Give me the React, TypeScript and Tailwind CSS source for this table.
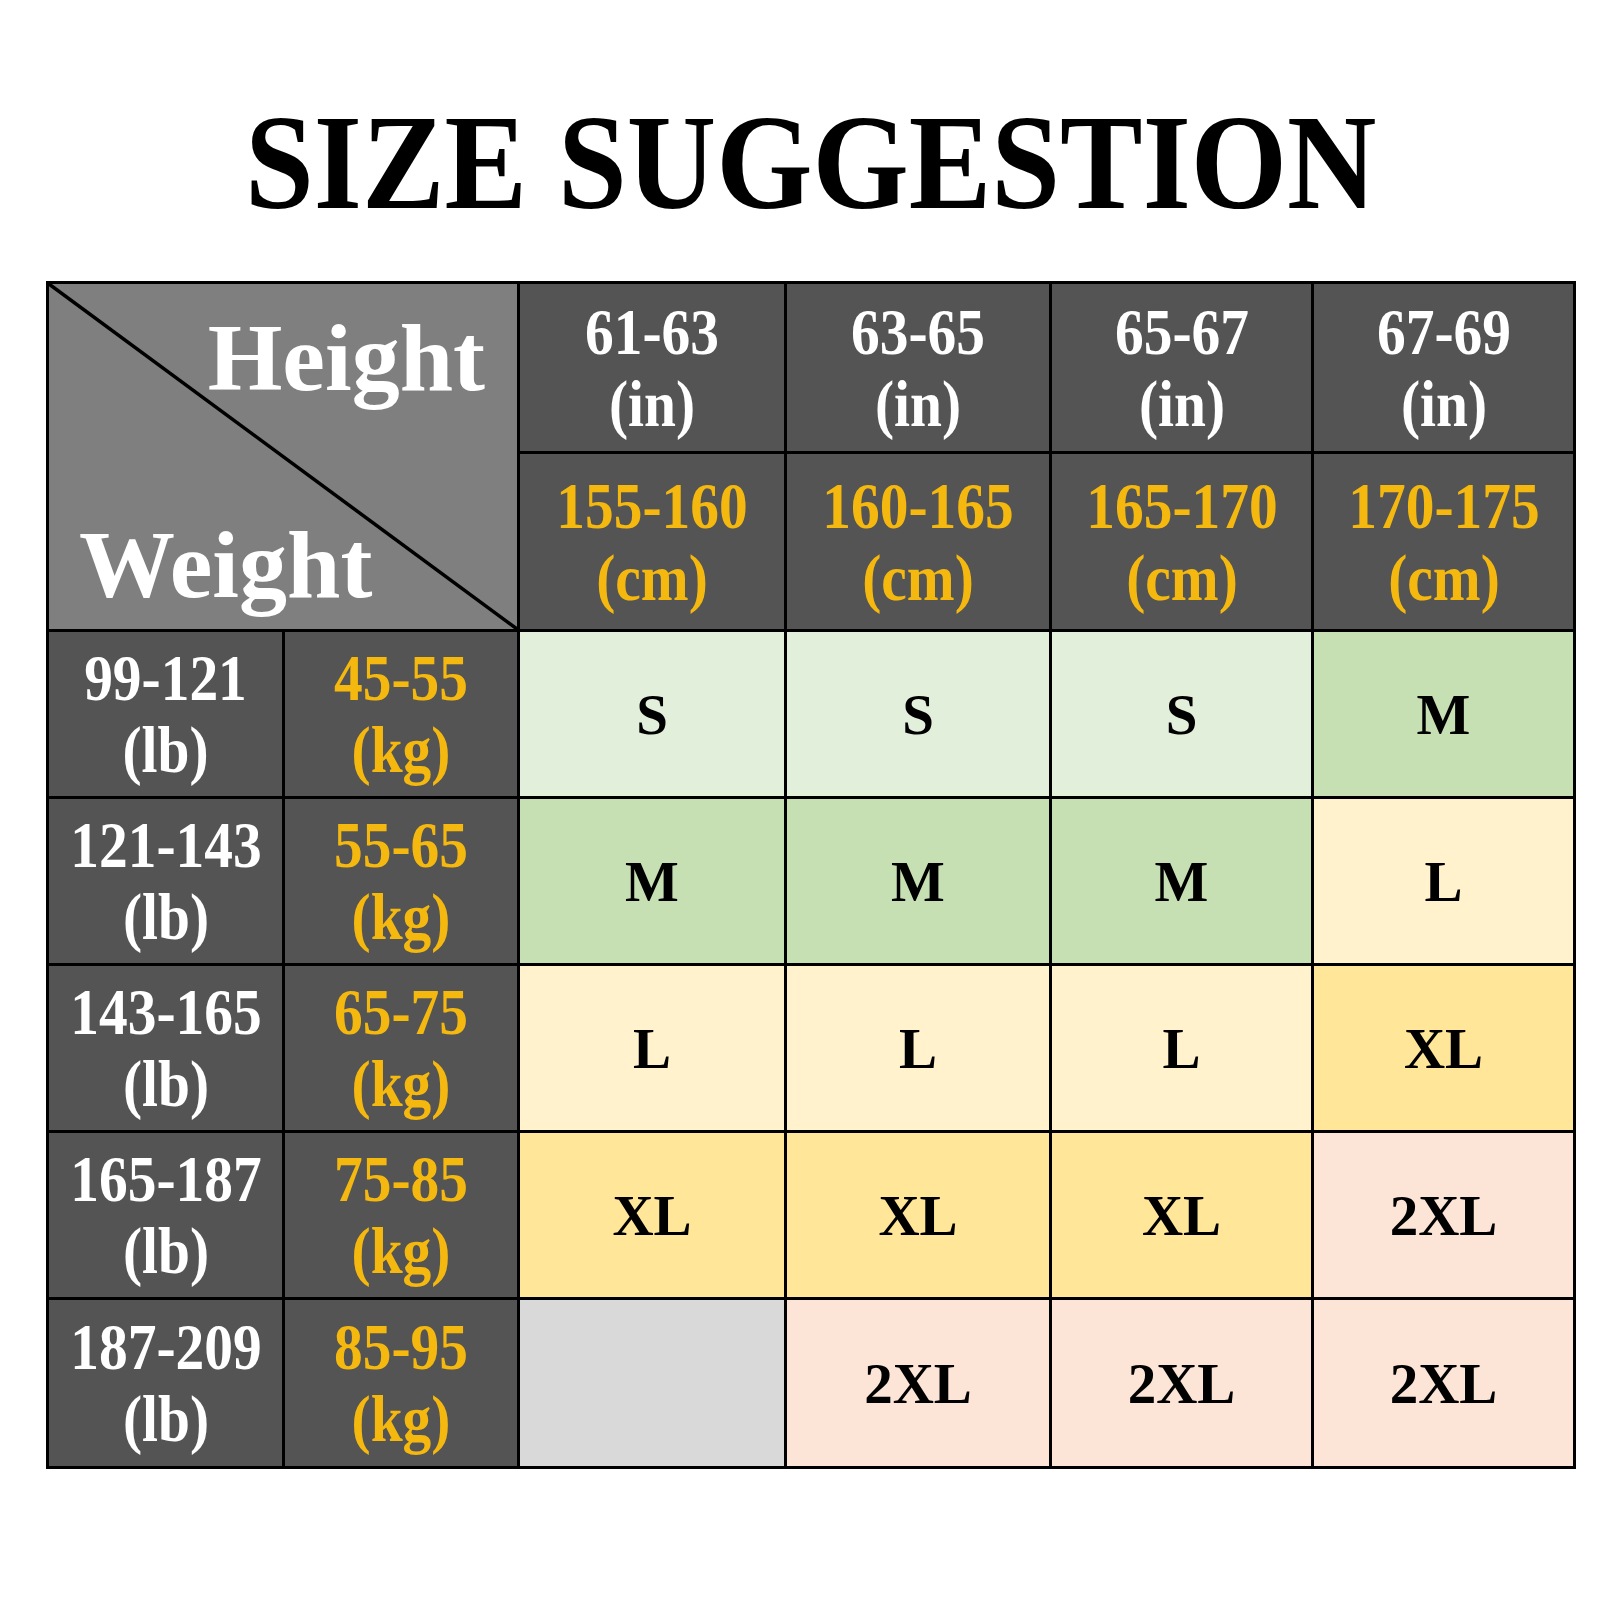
const serif = { fontFamily: '"Liberation Serif", "Times New Roman", serif' };

type Size = "S" | "M" | "L" | "XL" | "2XL" | "";

const sizeBg: Record<Size, string> = {
  S: "bg-[#e2efda]",
  M: "bg-[#c6e0b4]",
  L: "bg-[#fff2cc]",
  XL: "bg-[#ffe699]",
  "2XL": "bg-[#fce4d6]",
  "": "bg-[#d9d9d9]",
};

const heights = [
  { inch: "61-63", cm: "155-160" },
  { inch: "63-65", cm: "160-165" },
  { inch: "65-67", cm: "165-170" },
  { inch: "67-69", cm: "170-175" },
];

const rows: { lb: string; kg: string; sizes: Size[] }[] = [
  { lb: "99-121", kg: "45-55", sizes: ["S", "S", "S", "M"] },
  { lb: "121-143", kg: "55-65", sizes: ["M", "M", "M", "L"] },
  { lb: "143-165", kg: "65-75", sizes: ["L", "L", "L", "XL"] },
  { lb: "165-187", kg: "75-85", sizes: ["XL", "XL", "XL", "2XL"] },
  { lb: "187-209", kg: "85-95", sizes: ["", "2XL", "2XL", "2XL"] },
];

// two-line label cell, text is a bit narrow in the original so squeeze it
const LabelCell = ({ top, bottom, yellow }: { top: string; bottom: string; yellow?: boolean }) => (
  <div className="flex items-center justify-center bg-[#545454]">
    <div
      className={`flex scale-x-[0.87] flex-col items-center text-[66px] font-bold leading-[72px] ${
        yellow ? "text-[#f5b80f]" : "text-white"
      }`}
    >
      <span>{top}</span>
      <span>{bottom}</span>
    </div>
  </div>
);

export default function App() {
  return (
    <div className="min-h-[1600px] w-[1600px] bg-white pl-[46px]" style={serif}>
      <div className="flex w-[1530px] justify-center pt-[94px]">
        <h1 className="scale-x-[0.91] text-[136px] font-bold leading-none text-black">
          SIZE SUGGESTION
        </h1>
      </div>

      <div className="mt-[51px] grid w-[1530px] grid-cols-[233px_232px_264px_262px_259px_259px] grid-rows-[167px_175px_164px_164px_164px_164px_166px] gap-[3px] border-[3px] border-black bg-black">
        {/* corner cell */}
        <div className="relative col-span-2 row-span-2 flex flex-col justify-between bg-[#7f7f7f] pt-[26px] pb-[16px]">
          <svg
            className="absolute inset-0 h-full w-full"
            viewBox="0 0 100 100"
            preserveAspectRatio="none"
          >
            <line x1="0" y1="0" x2="100" y2="100" stroke="black" strokeWidth="3.5" vectorEffect="non-scaling-stroke" />
          </svg>
          <span className="relative self-end pr-[32px] text-[96px] font-bold leading-none text-white">
            Height
          </span>
          <span className="relative self-start pl-[30px] text-[96px] font-bold leading-none text-white">
            Weight
          </span>
        </div>

        {heights.map((h) => (
          <LabelCell key={h.inch} top={h.inch} bottom="(in)" />
        ))}
        {heights.map((h) => (
          <LabelCell key={h.cm} top={h.cm} bottom="(cm)" yellow />
        ))}

        {rows.map((r) => (
          <div key={r.lb} className="contents">
            <LabelCell top={r.lb} bottom="(lb)" />
            <LabelCell top={r.kg} bottom="(kg)" yellow />
            {r.sizes.map((s, i) => (
              <div key={i} className={`flex items-center justify-center ${sizeBg[s]}`}>
                <span className="text-[57px] font-bold leading-none text-black">{s}</span>
              </div>
            ))}
          </div>
        ))}
      </div>
    </div>
  );
}
